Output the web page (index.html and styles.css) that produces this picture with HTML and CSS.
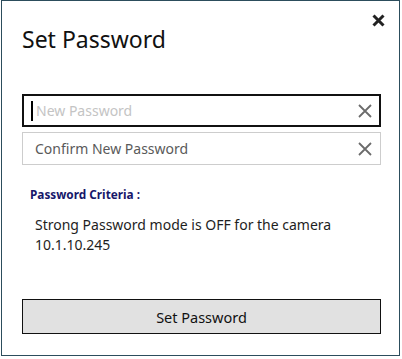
FILE: index.html
```html
<!doctype html>
<html>
<head>
<meta charset="utf-8">
<title>Set Password</title>
<link rel="stylesheet" href="styles.css">
</head>
<body>
<div class="dialog">
	<a class="close" href="#" title="Close">
		<svg width="13" height="13" viewBox="0 0 13 13"><path d="M1.5 1.5 L11.5 11.5 M11.5 1.5 L1.5 11.5" stroke="#222" stroke-width="3" stroke-linecap="butt"/></svg>
	</a>
	<h1 class="title">Set Password</h1>
	<div class="fields">
		<div class="field focused">
			<span class="caret"></span>
			<span class="placeholder">New Password</span>
			<svg class="clear" width="14" height="14" viewBox="0 0 14 14"><path d="M1 1 L13 13 M13 1 L1 13" stroke="#6b6b6b" stroke-width="1.8"/></svg>
		</div>
		<div class="field">
			<span class="placeholder dark">Confirm New Password</span>
			<svg class="clear" width="14" height="14" viewBox="0 0 14 14"><path d="M1 1 L13 13 M13 1 L1 13" stroke="#6b6b6b" stroke-width="1.8"/></svg>
		</div>
	</div>
	<div class="criteria">
		<h2>Password Criteria :</h2>
		<p>Strong Password mode is OFF for the camera<br>10.1.10.245</p>
	</div>
	<button class="submit">Set Password</button>
</div>
</body>
</html>
```

FILE: styles.css
```css
*{
	margin:0;
	padding:0;
	box-sizing:border-box;
}
body{
	background:#fff;
	font-family:"Noto Sans","Open Sans","Liberation Sans",sans-serif;
	color:#1a1a1a;
}
.dialog{
	position:relative;
	margin-left:1px;
	width:399px;
	height:356px;
	border:1px solid #2c4d5c;
	padding:0 18px 0 20px;
	display:flex;
	flex-direction:column;
}
.close{
	position:absolute;
	top:13px;
	right:14px;
	line-height:0;
}
.title{
	font-size:23px;
	font-weight:normal;
	color:#111;
	margin-top:22px;
	line-height:32px;
}
.fields{
	margin-top:39px;
	display:flex;
	flex-direction:column;
	gap:5px;
}
.field{
	height:33px;
	border:1px solid #cdcdcd;
	display:flex;
	align-items:center;
	padding:0 8px 0 12px;
}
.field.focused{
	border:2px solid #111;
	padding-left:7px;
	padding-right:7px;
}
.caret{
	width:2px;
	height:20px;
	background:#000;
	margin-right:3px;
}
.placeholder{
	flex:1;
	font-size:14px;
	color:#c4c4c4;
}
.placeholder.dark{
	color:#5a5a5a;
}
.criteria{
	margin-top:20px;
	padding-left:8px;
}
.criteria h2{
	font-size:11.8px;
	font-weight:bold;
	color:#17186a;
	line-height:18px;
}
.criteria p{
	margin-top:12px;
	padding-left:5px;
	font-size:14px;
	line-height:20px;
	color:#1e1e1e;
}
.submit{
	margin-top:auto;
	margin-bottom:21px;
	height:35px;
	width:100%;
	background:#e1e1e1;
	border:1.5px solid #111;
	font-family:inherit;
	font-size:14.5px;
	color:#111;
}
```
